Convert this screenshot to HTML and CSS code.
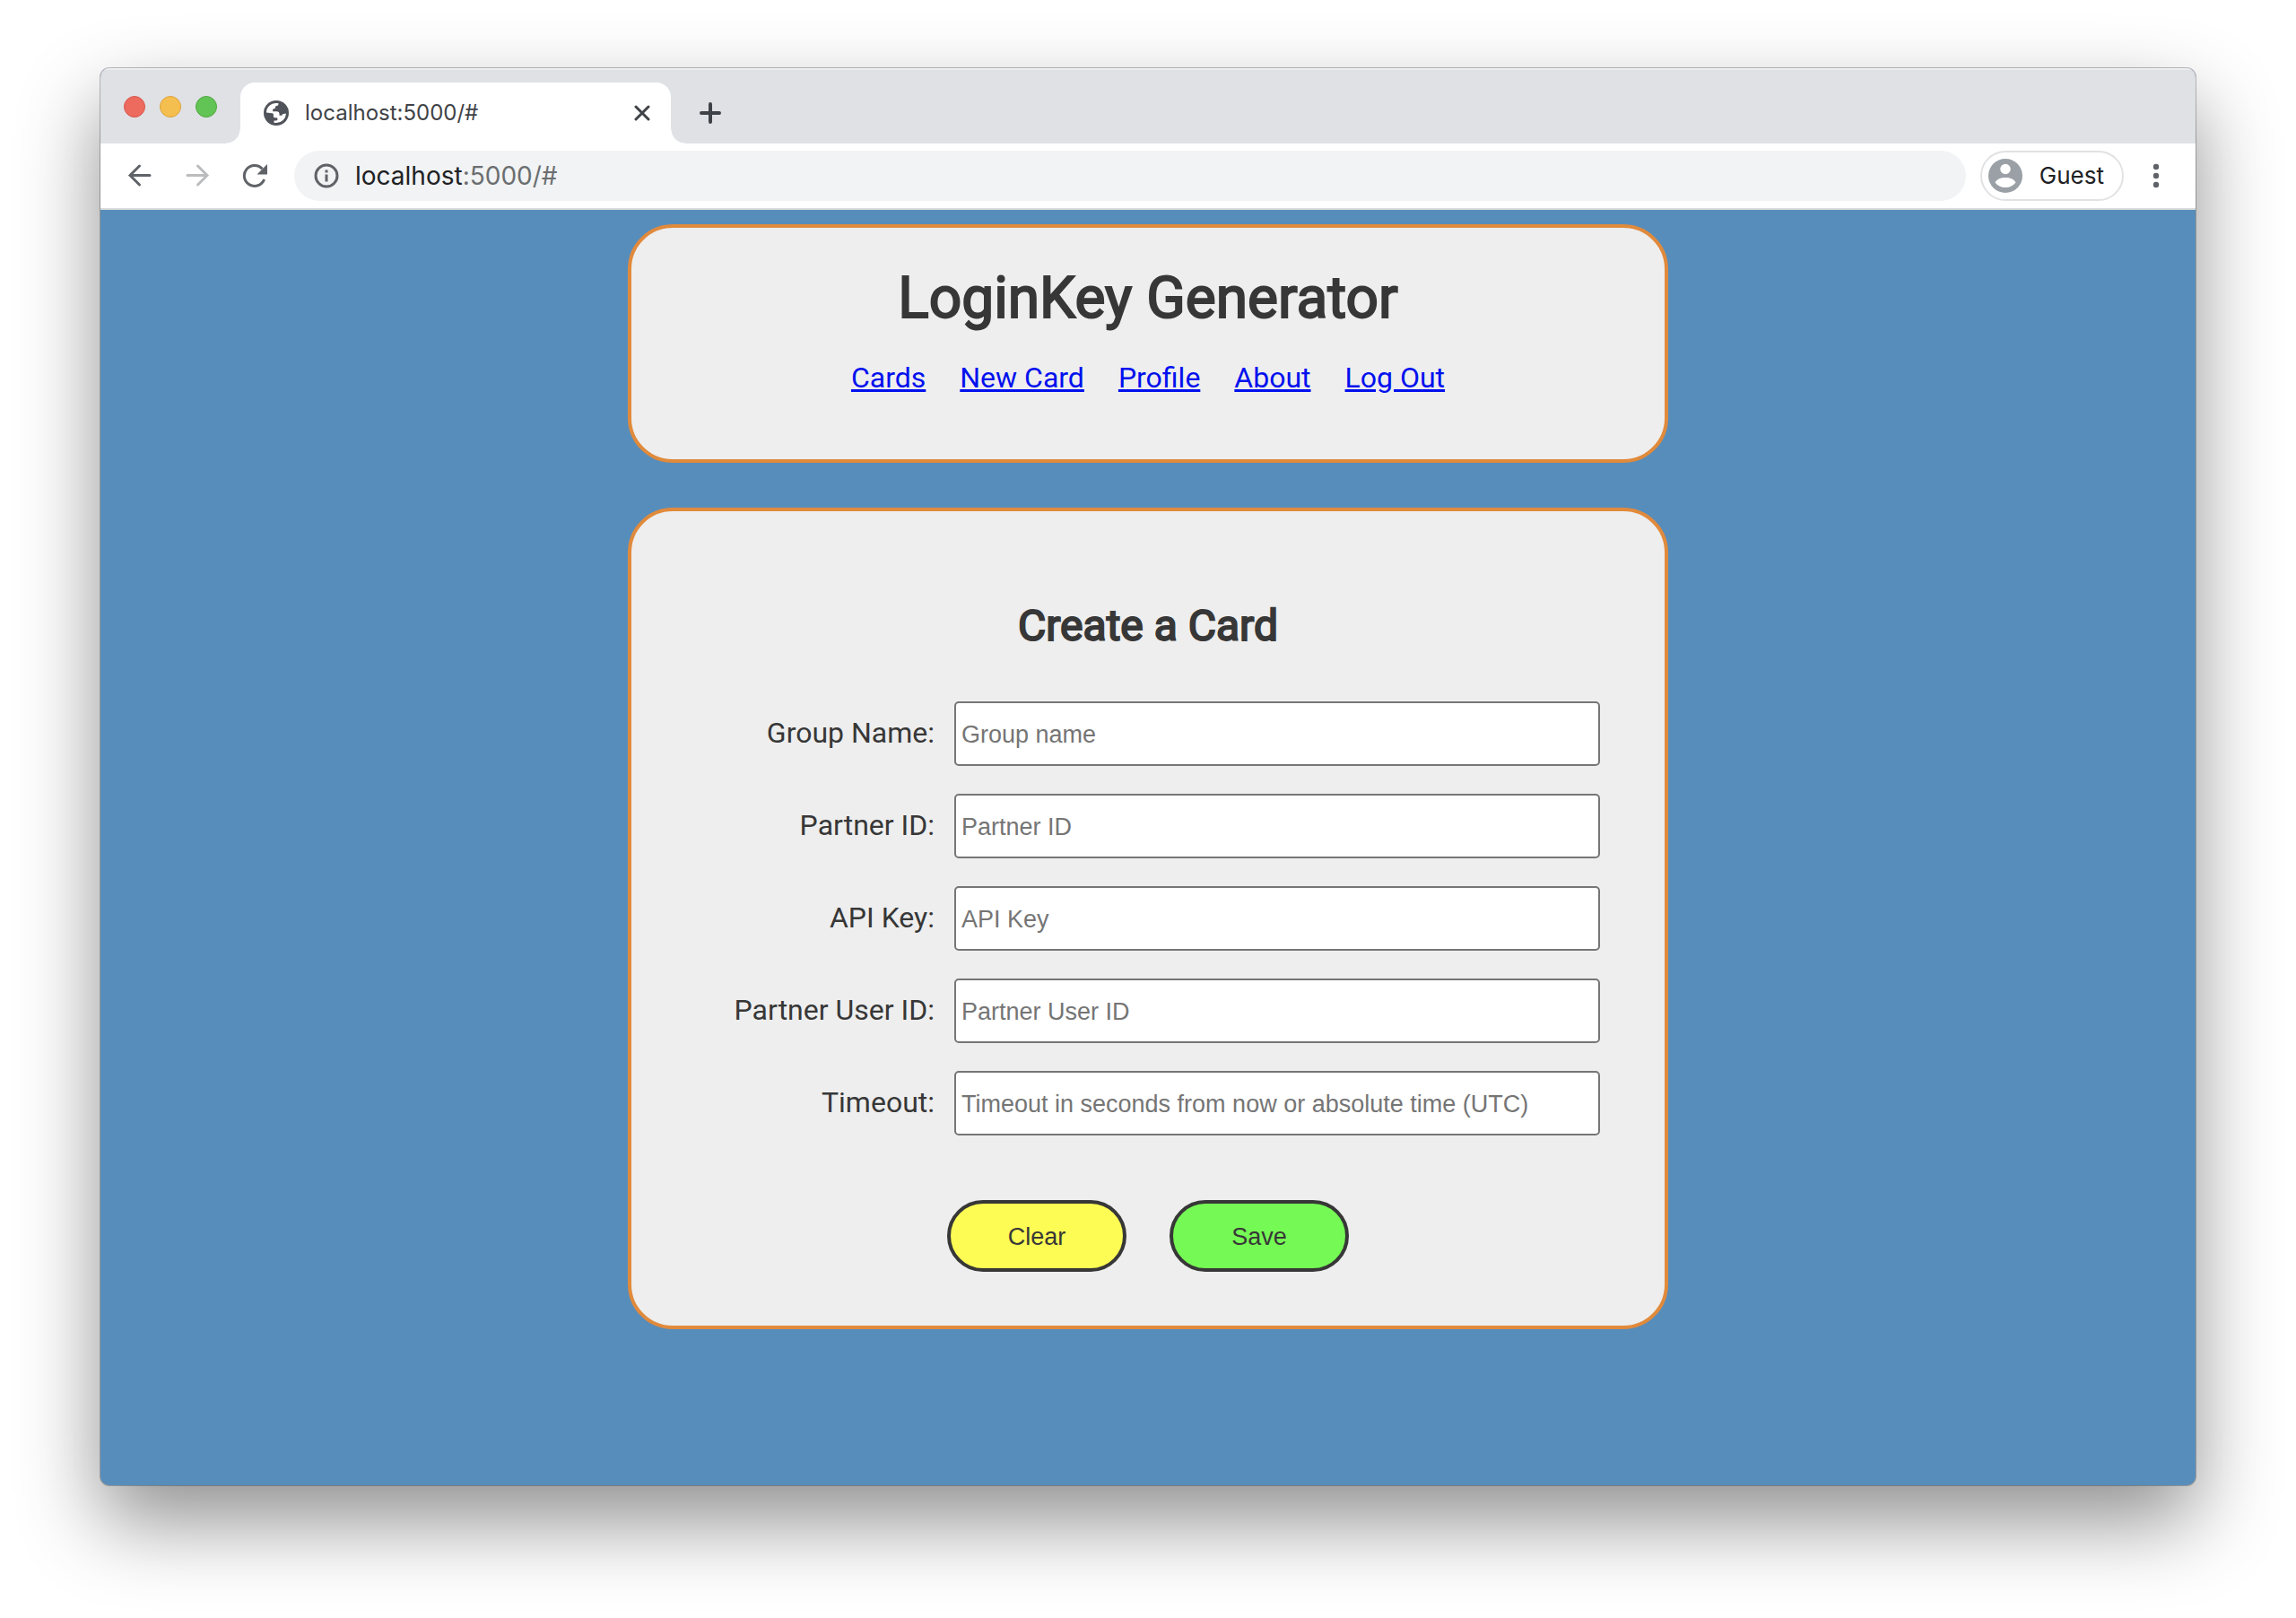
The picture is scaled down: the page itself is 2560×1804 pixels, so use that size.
FILE: index.html
```html
<!DOCTYPE html>
<html lang="en">
<head>
<meta charset="utf-8">
<meta name="viewport" content="width=device-width, initial-scale=1">
<title>LoginKey Generator</title>
<link rel="stylesheet" href="styles.css">
</head>
<body>
<div class="window">
  <div class="tab-strip">
    <div class="lights">
      <button class="light light-close" type="button" aria-label="Close window"></button>
      <button class="light light-minimize" type="button" aria-label="Minimize window"></button>
      <button class="light light-zoom" type="button" aria-label="Zoom window"></button>
    </div>
    <div class="tab">
      <svg class="globe" viewBox="0 0 28 28" aria-hidden="true"><circle cx="14" cy="14" r="14" fill="#50535a"/><path fill="#fff" d="M3 13.500C3 7.500 8 3 14 3c1 0 2 .1 2.900.4-.1 1.500-.9 2.400-2.400 2.600-1.200.2-1.500.8-1.500 1.800 0 1.200-.8 1.700-2 1.700-.6 0-.9.5-.9 1.200v1.600h4.500c2 0 2.900 1 2.900 2.700v1.800h1.800c1 0 1.500-.6 1.700-1.600L25 14.500A11 11 0 0 1 14 25c-.9 0-1.700-.1-2.500-.3v-2.200h2.300c1.200 0 1.700-.7 1.700-1.700 0-1-.6-1.600-1.700-1.600h-1.300c-1.100 0-1.600-.6-1.600-1.600v-1.700c0-1-.6-1.600-1.700-1.600z"/><path fill="#50535a" d="M16.500 3.200v1.600c0 1.200-.8 2-2 2.200-.8.200-1 .7-1 1.500 0 1.300.7 2 2 2 1.100 0 1.600.6 1.600 1.600 0 1.500.9 2.400 2.500 2.400 1.200 0 1.600-1 2.500-1h3.400C25 8.500 21.500 4.500 16.500 3.200z"/></svg>
      <span class="tab-title">localhost:5000/#</span>
      <button class="icon-button tab-close" type="button" aria-label="Close tab"><svg width="18" height="18" viewBox="0 0 18 18"><path d="M2 2l14 14M16 2L2 16" stroke="#3f4246" stroke-width="3" stroke-linecap="round"/></svg></button>
    </div>
    <button class="icon-button new-tab" type="button" aria-label="New tab"><svg width="24" height="24" viewBox="0 0 24 24"><path d="M12 2v20M2 12h20" stroke="#3f4246" stroke-width="4" stroke-linecap="round"/></svg></button>
  </div>

  <div class="toolbar">
    <div class="nav-buttons">
      <button class="icon-button" type="button" aria-label="Back"><svg width="28" height="28" viewBox="0 0 28 28"><path d="M25 13.500H3M13.500 3L3 13.500 13.500 24" fill="none" stroke="#5f6368" stroke-width="3" stroke-linecap="round"/></svg></button>
      <button class="icon-button" type="button" aria-label="Forward"><svg width="28" height="28" viewBox="0 0 28 28"><path d="M3 13.500h22M14.500 3L25 13.500 14.500 24" fill="none" stroke="#babcbe" stroke-width="3" stroke-linecap="round"/></svg></button>
      <button class="icon-button" type="button" aria-label="Reload"><svg width="28" height="28" viewBox="0 0 28 28"><path d="M24.600 18A11.500 11.500 0 1 1 22.500 6.300" fill="none" stroke="#5f6368" stroke-width="3"/><path d="M28 1v11.500H16.500z" fill="#5f6368"/></svg></button>
    </div>
    <div class="address-bar">
      <svg width="28" height="28" viewBox="0 0 28 28" aria-hidden="true"><circle cx="14" cy="14" r="12" fill="none" stroke="#5f6368" stroke-width="3"/><path d="M12.500 12.500h3v8h-3zM12.500 7.500h3v3h-3z" fill="#5f6368"/></svg>
      <div class="address" role="textbox" aria-label="Address" contenteditable="true" spellcheck="false"><span class="host">localhost</span>:5000/#</div>
    </div>
    <button class="profile" type="button">
      <svg width="38" height="38" viewBox="0 0 38 38" aria-hidden="true"><circle cx="19" cy="19" r="19" fill="#9aa0a6"/><circle cx="19" cy="11.500" r="5.700" fill="#fff"/><path d="M7.500 26.500c2-3.800 6.500-5.500 11.500-5.500s9.500 1.700 11.500 5.500c-2.500 3.500-6.500 5.500-11.500 5.500s-9-2-11.500-5.500z" fill="#fff"/></svg>
      <span>Guest</span>
    </button>
    <button class="icon-button" type="button" aria-label="Menu"><svg width="28" height="28" viewBox="0 0 28 28"><g fill="#5f6368"><circle cx="14" cy="4" r="3.200"/><circle cx="14" cy="14" r="3.200"/><circle cx="14" cy="24" r="3.200"/></g></svg></button>
  </div>

  <main class="page">
    <header class="card site-header">
      <h1>LoginKey Generator</h1>
      <nav class="site-nav">
        <a href="#">Cards</a>
        <a href="#">New Card</a>
        <a href="#">Profile</a>
        <a href="#">About</a>
        <a href="#">Log Out</a>
      </nav>
    </header>

    <form class="card card-form">
      <h2>Create a Card</h2>
      <div class="fields">
        <label for="group-name">Group Name:</label>
        <input id="group-name" type="text" placeholder="Group name">
        <label for="partner-id">Partner ID:</label>
        <input id="partner-id" type="text" placeholder="Partner ID">
        <label for="api-key">API Key:</label>
        <input id="api-key" type="text" placeholder="API Key">
        <label for="partner-user-id">Partner User ID:</label>
        <input id="partner-user-id" type="text" placeholder="Partner User ID">
        <label for="timeout">Timeout:</label>
        <input id="timeout" type="text" placeholder="Timeout in seconds from now or absolute time (UTC)">
      </div>
      <div class="actions">
        <button class="action clear" type="reset">Clear</button>
        <button class="action save" type="button">Save</button>
      </div>
    </form>
  </main>
</div>
</body>
</html>
```
FILE: styles.css
```css
* {
  box-sizing: border-box;
}

body {
  display: flex;
  min-height: 100vh;
  margin: 0;
  padding: 76px 112px 148px;
  background: #fff;
  color: #373737;
  font-family: Roboto, "Liberation Sans", sans-serif;
  font-size: 32px;
  line-height: 38px;
}

button {
  margin: 0;
  padding: 0;
  border: 0;
  background: none;
  font: inherit;
  color: inherit;
}

svg {
  display: block;
  flex: none;
}

/* Browser window */
.window {
  display: flex;
  flex: 1;
  flex-direction: column;
  min-width: 0;
  overflow: hidden;
  border-radius: 10px;
  background: #578dbb;
  box-shadow: 0 0 0 1px rgba(0, 0, 0, 0.25), 0 40px 90px rgba(0, 0, 0, 0.44);
}

.tab-strip {
  display: flex;
  align-items: flex-end;
  padding: 16px 28px 0 26px;
  background: #dfe1e5;
  box-shadow: inset 0 2px 0 #eceef0;
  font-family: Inter, "Liberation Sans", sans-serif;
}

.lights {
  display: flex;
  gap: 16px;
  align-self: center;
  width: 130px;
  padding-bottom: 14px;
}

.light {
  width: 24px;
  height: 24px;
  border-radius: 50%;
}

.light-close {
  border: 1px solid #d9564c;
  background: #ed6a5f;
}

.light-minimize {
  border: 1px solid #dda23b;
  background: #f5bf4f;
}

.light-zoom {
  border: 1px solid #51a73e;
  background: #61c454;
}

.tab {
  position: relative;
  display: flex;
  align-items: center;
  width: 480px;
  height: 68px;
  padding: 0 22px 0 26px;
  border-radius: 16px 16px 0 0;
  background: #fff;
}

/* Curved feet where the tab meets the toolbar */
.tab::before,
.tab::after {
  position: absolute;
  bottom: 0;
  width: 16px;
  height: 16px;
  content: "";
}

.tab::before {
  right: 100%;
  background: radial-gradient(circle at 0 0, #dfe1e5 15px, #fff 16px);
}

.tab::after {
  left: 100%;
  background: radial-gradient(circle at 100% 0, #dfe1e5 15px, #fff 16px);
}

.globe {
  width: 28px;
  height: 28px;
}

.tab-title {
  flex: 1;
  margin-left: 18px;
  color: #3f4246;
  font-size: 24px;
}

.icon-button {
  display: grid;
  place-items: center;
  flex: none;
  width: 28px;
  height: 28px;
}

.tab-close {
  width: 20px;
}

.new-tab {
  align-self: center;
  margin-left: 30px;
}

.toolbar {
  display: flex;
  align-items: center;
  gap: 16px;
  padding: 8px 30px;
  border-bottom: 2px solid #d9dcdb;
  background: #fff;
  font-family: Inter, "Liberation Sans", sans-serif;
  font-size: 26px;
}

.nav-buttons {
  display: flex;
  gap: 36px;
  padding-right: 14px;
}

.address-bar {
  display: flex;
  flex: 1;
  align-items: center;
  gap: 18px;
  height: 56px;
  padding: 0 22px;
  border-radius: 28px;
  background: #f1f3f4;
}

.address {
  flex: 1;
  color: #6b6e70;
  font-size: 28px;
}

.host {
  color: #202124;
}

.profile {
  display: flex;
  align-items: center;
  justify-content: space-between;
  width: 160px;
  height: 56px;
  margin-right: 6px;
  padding: 0 20px 0 7px;
  border: 2px solid #e1e2e4;
  border-radius: 28px;
  color: #202124;
}

/* Page */
.page {
  display: flex;
  flex: 1;
  flex-direction: column;
  align-items: center;
  gap: 50px;
  padding: 16px 24px;
}

.card {
  width: 100%;
  max-width: 1160px;
  border: 4px solid #e08a3c;
  border-radius: 50px;
  background: #eee;
}

h1,
h2 {
  margin: 0;
  font-weight: 400;
  text-align: center;
}

h1 {
  font-size: 64px;
  line-height: 76px;
  -webkit-text-stroke: 2px #373737;
}

h2 {
  font-size: 48px;
  line-height: 56px;
  -webkit-text-stroke: 2px #373737;
}

.site-header {
  padding: 41px 72px 72px;
}

.site-nav {
  display: flex;
  flex-wrap: wrap;
  justify-content: center;
  gap: 38px;
  margin-top: 31px;
}

.site-nav a {
  color: #0010ee;
}

.card-form {
  padding: 100px 72px 60px;
}

.fields {
  display: grid;
  grid-template-columns: minmax(0, 1fr) minmax(0, 720px);
  align-items: center;
  gap: 31px 22px;
  margin-top: 56px;
}

.fields label {
  padding-bottom: 2px;
  text-align: right;
}

.fields input {
  width: 100%;
  height: 72px;
  padding: 2px 6px 0;
  border: 2px solid #767676;
  border-radius: 5px;
  background: #fff;
  color: #373737;
  font-family: "Liberation Sans", Arial, sans-serif;
  font-size: 27px;
}

.fields input::placeholder {
  color: #757575;
}

.actions {
  display: flex;
  justify-content: center;
  gap: 48px;
  margin-top: 72px;
}

.action {
  width: 200px;
  height: 80px;
  padding-top: 2px;
  border: 4px solid #373737;
  border-radius: 40px;
  font-family: "Liberation Sans", Arial, sans-serif;
  font-size: 27px;
}

.clear {
  background: #fcfc54;
}

.save {
  background: #75f954;
}
```
